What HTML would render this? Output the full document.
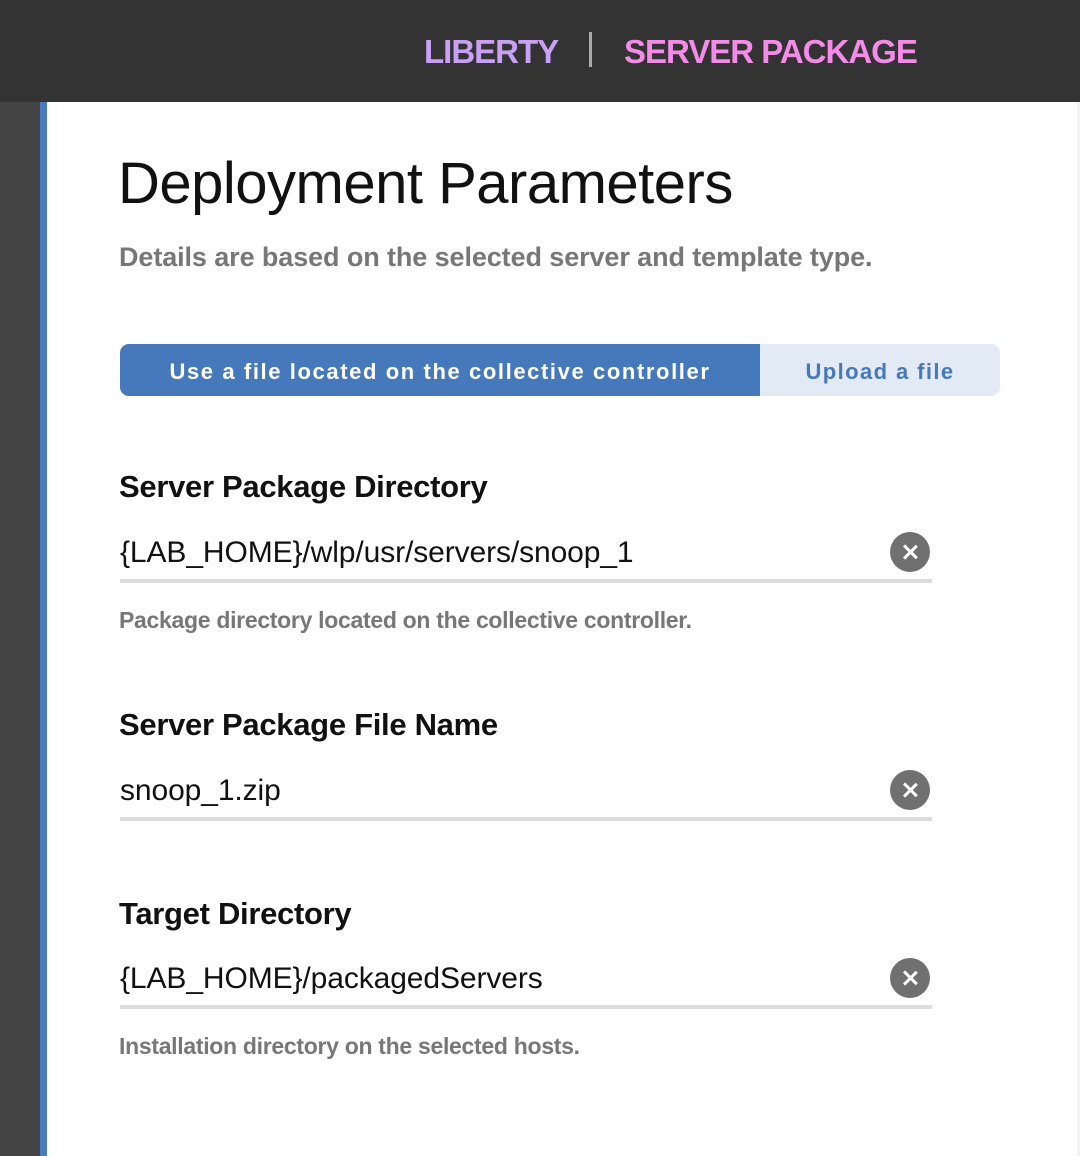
<!DOCTYPE html>
<html><head><meta charset="utf-8"><style>
*{margin:0;padding:0;box-sizing:border-box}
body{width:1080px;height:1156px;overflow:hidden;background:#fff;font-family:"Liberation Sans",Arial,sans-serif;position:relative}
.hdr{position:absolute;left:0;top:0;width:1080px;height:102px;background:#333}
.hdr span{position:absolute;top:33px;font-size:33px;font-weight:bold;letter-spacing:-1px}
.lside{position:absolute;left:0;top:102px;width:40px;height:1054px;background:#444}
.bline{position:absolute;left:40px;top:102px;width:7px;height:1054px;background:#4a7bbf}
.rside{position:absolute;left:1077px;top:102px;width:3px;height:1054px;background:#f2f2f2}
.t{position:absolute;left:119px}
h1{position:absolute;left:118px;top:150px;font-size:58px;font-weight:normal;letter-spacing:-0.5px;color:#111}
.sub{top:242px;font-size:27px;font-weight:bold;color:#777;letter-spacing:-0.1px}
.tog{position:absolute;left:120px;top:344px;width:880px;height:52px;border-radius:9px;background:#e2eaf5;overflow:hidden}
.tog .a{position:absolute;left:0;top:0;width:640px;height:52px;background:#4679bb;color:#fff;font-size:22px;font-weight:bold;letter-spacing:1.6px;text-align:center;line-height:56px}
.tog .b{position:absolute;left:640px;top:0;width:240px;height:52px;color:#4679bb;font-size:22px;font-weight:bold;letter-spacing:1.4px;text-align:center;line-height:56px}
.lbl{font-size:31px;font-weight:bold;color:#111;letter-spacing:-0.3px}
.val{font-size:30px;color:#111;letter-spacing:-0.1px}
.line{position:absolute;left:120px;width:812px;height:4px;background:#ddd}
.x{position:absolute;left:890px;width:40px;height:40px;border-radius:50%;background:#707070}
.x:before,.x:after{content:"";position:absolute;left:19px;top:11px;width:2.5px;height:18px;background:#fff;transform:rotate(45deg)}
.x:after{transform:rotate(-45deg)}
.help{font-size:23px;font-weight:bold;color:#777;letter-spacing:-0.3px}
</style></head><body>
<div class="hdr"><span style="left:424px;color:#c9a0f6">LIBERTY</span><span style="left:589px;top:32px;width:3px;height:35px;background:#aaa"></span><span style="left:624px;color:#f58be8">SERVER PACKAGE</span></div>
<div class="lside"></div><div class="bline"></div><div class="rside"></div>
<h1>Deployment Parameters</h1>
<div class="t sub">Details are based on the selected server and template type.</div>
<div class="tog"><div class="a">Use a file located on the collective controller</div><div class="b">Upload a file</div></div>

<div class="t lbl" style="top:469px">Server Package Directory</div>
<div class="t val" style="top:536px;left:120px">{LAB_HOME}/wlp/usr/servers/snoop_1</div>
<div class="x" style="top:532px"></div>
<div class="line" style="top:579px"></div>
<div class="t help" style="top:607px">Package directory located on the collective controller.</div>

<div class="t lbl" style="top:707px">Server Package File Name</div>
<div class="t val" style="top:774px;left:120px">snoop_1.zip</div>
<div class="x" style="top:770px"></div>
<div class="line" style="top:817px"></div>

<div class="t lbl" style="top:896px">Target Directory</div>
<div class="t val" style="top:962px;left:120px">{LAB_HOME}/packagedServers</div>
<div class="x" style="top:958px"></div>
<div class="line" style="top:1005px"></div>
<div class="t help" style="top:1033px">Installation directory on the selected hosts.</div>
</body></html>
